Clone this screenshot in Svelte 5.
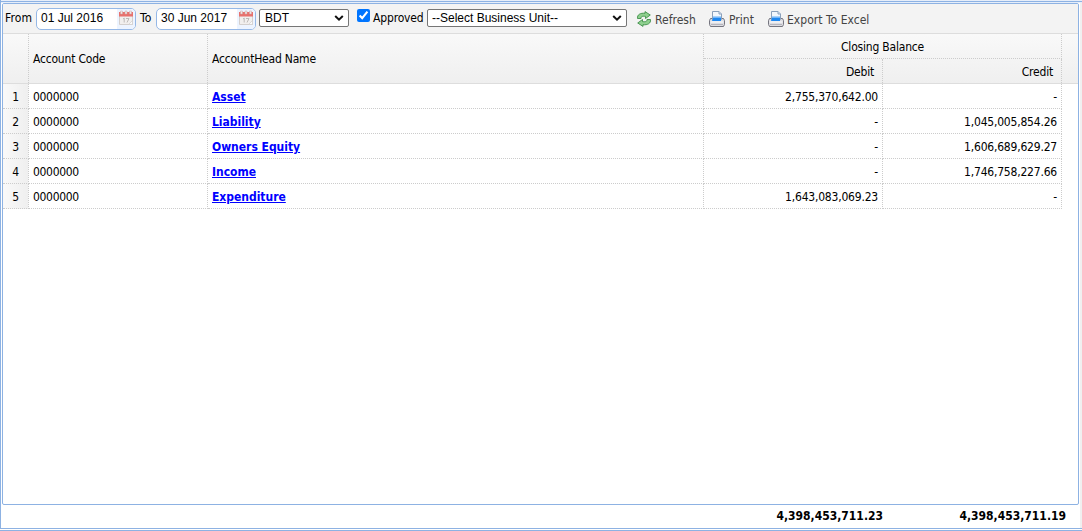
<script>
    let currency = "BDT";
    let unit = "--Select Business Unit--";
    let approved = true;

    const rows = [
        { code: "0000000", name: "Asset", debit: "2,755,370,642.00", credit: "-" },
        { code: "0000000", name: "Liability", debit: "-", credit: "1,045,005,854.26" },
        { code: "0000000", name: "Owners Equity", debit: "-", credit: "1,606,689,629.27" },
        { code: "0000000", name: "Income", debit: "-", credit: "1,746,758,227.66" },
        { code: "0000000", name: "Expenditure", debit: "1,643,083,069.23", credit: "-" }
    ];
</script>

{#snippet dateBox(value)}
    <span class="datebox">
        <span class="date-text">{value}</span>
        <span class="date-btn">
            <svg width="16" height="16" viewBox="0 0 16 16">
                <path d="M1.500 2.500h13v12h-13z" fill="#f1efee" stroke="#d3cfcd" />
                <path d="M1 2h14v4.500H1z" fill="#e8716d" />
                <path d="M2.500 1h2v3h-2zM7 1h2v3H7zM11.500 1h2v3h-2z" fill="#f0e8e7" stroke="#cfa5a2" stroke-width=".5" />
                <path d="M5 9l1.200-1V12.500M8 8.500h3L9 12.500" fill="none" stroke="#bdbab8" />
                <path d="M10.500 14.500l4-4v4z" fill="#fafafa" stroke="#d0cdcb" stroke-width=".7" />
            </svg>
        </span>
    </span>
{/snippet}

{#snippet arrow()}
    <svg class="arrow" width="10" height="8" viewBox="0 0 10 8">
        <path d="M1.200 2l3.800 3.700L8.800 2" fill="none" stroke="#111" stroke-width="2" />
    </svg>
{/snippet}

{#snippet printer()}
    <svg width="16" height="16" viewBox="0 0 16 16">
        <path d="M1.500 7.500h13l1 2v4l-1 2h-13l-1-2v-4z" fill="#dcdce1" stroke="#75757f" />
        <path d="M3.500 8.500V.5H10L12.500 3v5.500z" fill="#f3f7fc" stroke="#8ba0bb" />
        <path d="M10 .5V3h2.500" fill="#dce6f2" stroke="#8ba0bb" />
        <path d="M4 5h8v1.500H4z" fill="#a9d3fb" />
        <path d="M4 6.500h8V10H3z" fill="#1f88f0" />
        <path d="M1.500 11h13" stroke="#fff" />
        <path d="M2 13.500h12" stroke="#b5b5bd" />
    </svg>
{/snippet}

<div class="frame">
    <div class="panel">
        <div class="toolbar">
            <span class="lbl from">From</span>
            {@render dateBox("01 Jul 2016")}
            <span class="lbl to">To</span>
            {@render dateBox("30 Jun 2017")}
            <span class="select currency">{currency}{@render arrow()}</span>
            <input type="checkbox" bind:checked={approved} />
            <span class="lbl approved">Approved</span>
            <span class="select unit">{unit}{@render arrow()}</span>
            <button class="tool refresh">
                <svg width="16" height="16" viewBox="0 0 16 16">
                    <g fill="#8fd08f" stroke="#3f8f49" stroke-width=".9" stroke-linejoin="round">
                        <path d="M1.500 7.500C1 3.500 4.500 1.800 9 2.300V.6L14.300 4 9.500 7.500V5.400C6 5 5 5.500 5 7.500z" />
                        <path d="M14.500 8.500c.5 4-3 5.700-7.500 5.200v1.700L1.700 12l4.800-3.500v2.100c3.500.4 4.500-.1 4.500-2.100z" />
                    </g>
                </svg>
                <span>Refresh</span>
            </button>
            <button class="tool print">{@render printer()}<span>Print</span></button>
            <button class="tool export">{@render printer()}<span>Export To Excel</span></button>
        </div>

        <div class="header">
            <div class="cell num"></div>
            <div class="cell code">Account Code</div>
            <div class="cell name">AccountHead Name</div>
            <div class="group">
                <div class="group-title">Closing Balance</div>
                <div class="group-cols">
                    <div class="cell amount">Debit</div>
                    <div class="cell amount">Credit</div>
                </div>
            </div>
        </div>

        <div class="body">
            {#each rows as row, i}
                <div class="row">
                    <div class="cell num">{i + 1}</div>
                    <div class="cell code">{row.code}</div>
                    <div class="cell name"><a href="#{row.name}">{row.name}</a></div>
                    <div class="cell amount">{row.debit}</div>
                    <div class="cell amount">{row.credit}</div>
                </div>
            {/each}
        </div>
    </div>

    <div class="footer">
        <span class="total">4,398,453,711.23</span>
        <span class="total">4,398,453,711.19</span>
    </div>
</div>

<style>
    :global(body) {
        background: #fff;
        overflow: hidden;
    }

    .frame {
        box-sizing: border-box;
        width: 1082px;
        height: 531px;
        padding-top: 1px;
        border-bottom: 1px solid #8db2e3;
        background:
            linear-gradient(#8db2e3, #8db2e3) 0 1px / 100% 1px no-repeat,
            linear-gradient(#8db2e3, #8db2e3) 0 528px / 100% 1px no-repeat,
            linear-gradient(#8db2e3, #8db2e3) 0 0 / 1px 528px no-repeat,
            linear-gradient(#e6eefa, #e6eefa) 0 0 / 100% 3px no-repeat,
            linear-gradient(#f0f0f0, #f0f0f0) 1080px 0 / 2px 528px no-repeat,
            #fff;
        font: 12px "DejaVu Sans Condensed", "DejaVu Sans", sans-serif;
        font-stretch: condensed;
        letter-spacing: -0.2px;
        color: #000;
    }

    .panel {
        box-sizing: border-box;
        width: 1077px;
        height: 502px;
        margin: 2px 0 0 2px;
        border: 1px solid #8db2e3;
        border-radius: 2px;
        overflow: hidden;
    }

    .toolbar {
        display: flex;
        box-sizing: border-box;
        height: 30px;
        padding-left: 2px;
        border-bottom: 1px solid #ddd;
        background: #f3f3f3;
    }

    .lbl {
        line-height: 28px;
        white-space: nowrap;
    }

    .from {
        width: 31px;
        letter-spacing: 0.1px;
    }

    .to {
        width: 16px;
        margin-left: 4px;
        letter-spacing: 0.2px;
    }

    .datebox {
        display: flex;
        box-sizing: border-box;
        width: 100px;
        height: 22px;
        margin-top: 4px;
        border: 1px solid #95b8e7;
        border-radius: 5px;
        background: #fff;
        overflow: hidden;
        font: 12px/18px "Liberation Sans", Arial, sans-serif;
        letter-spacing: 0;
    }

    .date-text {
        flex: 1;
        padding-left: 4px;
    }

    .date-btn {
        width: 18px;
        height: 20px;
        padding: 1px 0 0 1px;
        box-sizing: border-box;
        background: #edf4ff;
    }

    .select {
        display: flex;
        justify-content: space-between;
        align-items: center;
        box-sizing: border-box;
        height: 18px;
        margin-top: 5px;
        padding: 0 4px 0 5px;
        border: 1px solid #767676;
        border-radius: 2px;
        background: #fff;
        font: 12px/16px "Liberation Sans", Arial, sans-serif;
        letter-spacing: 0;
    }

    .currency {
        width: 90px;
        margin-left: 3px;
    }

    .unit {
        width: 200px;
        padding-left: 4px;
    }

    input {
        width: 13px;
        height: 13px;
        margin: 5px 3px 0 8px;
    }

    .approved {
        width: 54px;
        letter-spacing: -0.15px;
    }

    .tool {
        display: flex;
        align-items: center;
        height: 30px;
        padding: 0;
        border: 0;
        background: none;
        font: inherit;
        font-stretch: condensed;
        letter-spacing: 0.03px;
        color: #444;
        white-space: nowrap;
    }

    .tool span {
        margin: 2px 0 0 3px;
    }

    .refresh {
        width: 73px;
        margin-left: 9px;
    }

    .print {
        width: 59px;
    }

    .print span {
        margin-left: 4px;
    }

    .header {
        display: flex;
        box-sizing: border-box;
        height: 50px;
        border-bottom: 1px solid #ddd;
        background: linear-gradient(#f9f9f9, #efefef);
    }

    .cell {
        display: flex;
        align-items: center;
        box-sizing: border-box;
        padding: 0 4px;
        border-right: 1px dotted #ccc;
        white-space: nowrap;
    }

    .num {
        width: 26px;
        justify-content: center;
    }

    .code {
        width: 179px;
    }

    .name {
        width: 496px;
    }

    .amount {
        width: 179px;
        justify-content: flex-end;
    }

    .group {
        width: 358px;
    }

    .group-title {
        box-sizing: border-box;
        height: 25px;
        border-right: 1px dotted #ccc;
        border-bottom: 1px dotted #ccc;
        line-height: 26px;
        text-align: center;
    }

    .group-cols {
        display: flex;
        height: 24px;
    }

    .group-cols .cell {
        padding: 2px 8px 0 0;
    }

    .row {
        display: flex;
        width: 1059px;
        height: 25px;
    }

    .row .cell {
        border-bottom: 1px dotted #ccc;
        padding-top: 2px;
    }

    .row .num {
        background: linear-gradient(to right, #f9f9f9, #efefef);
    }

    .row .code {
        letter-spacing: -0.32px;
    }

    .name a {
        color: #00f;
        font-weight: bold;
        letter-spacing: -0.02px;
    }

    .footer {
        display: flex;
        justify-content: flex-end;
        height: 23px;
        padding-right: 16px;
        font-weight: bold;
        line-height: 23px;
        letter-spacing: 0;
    }

    .total {
        width: 183px;
        text-align: right;
    }
</style>
